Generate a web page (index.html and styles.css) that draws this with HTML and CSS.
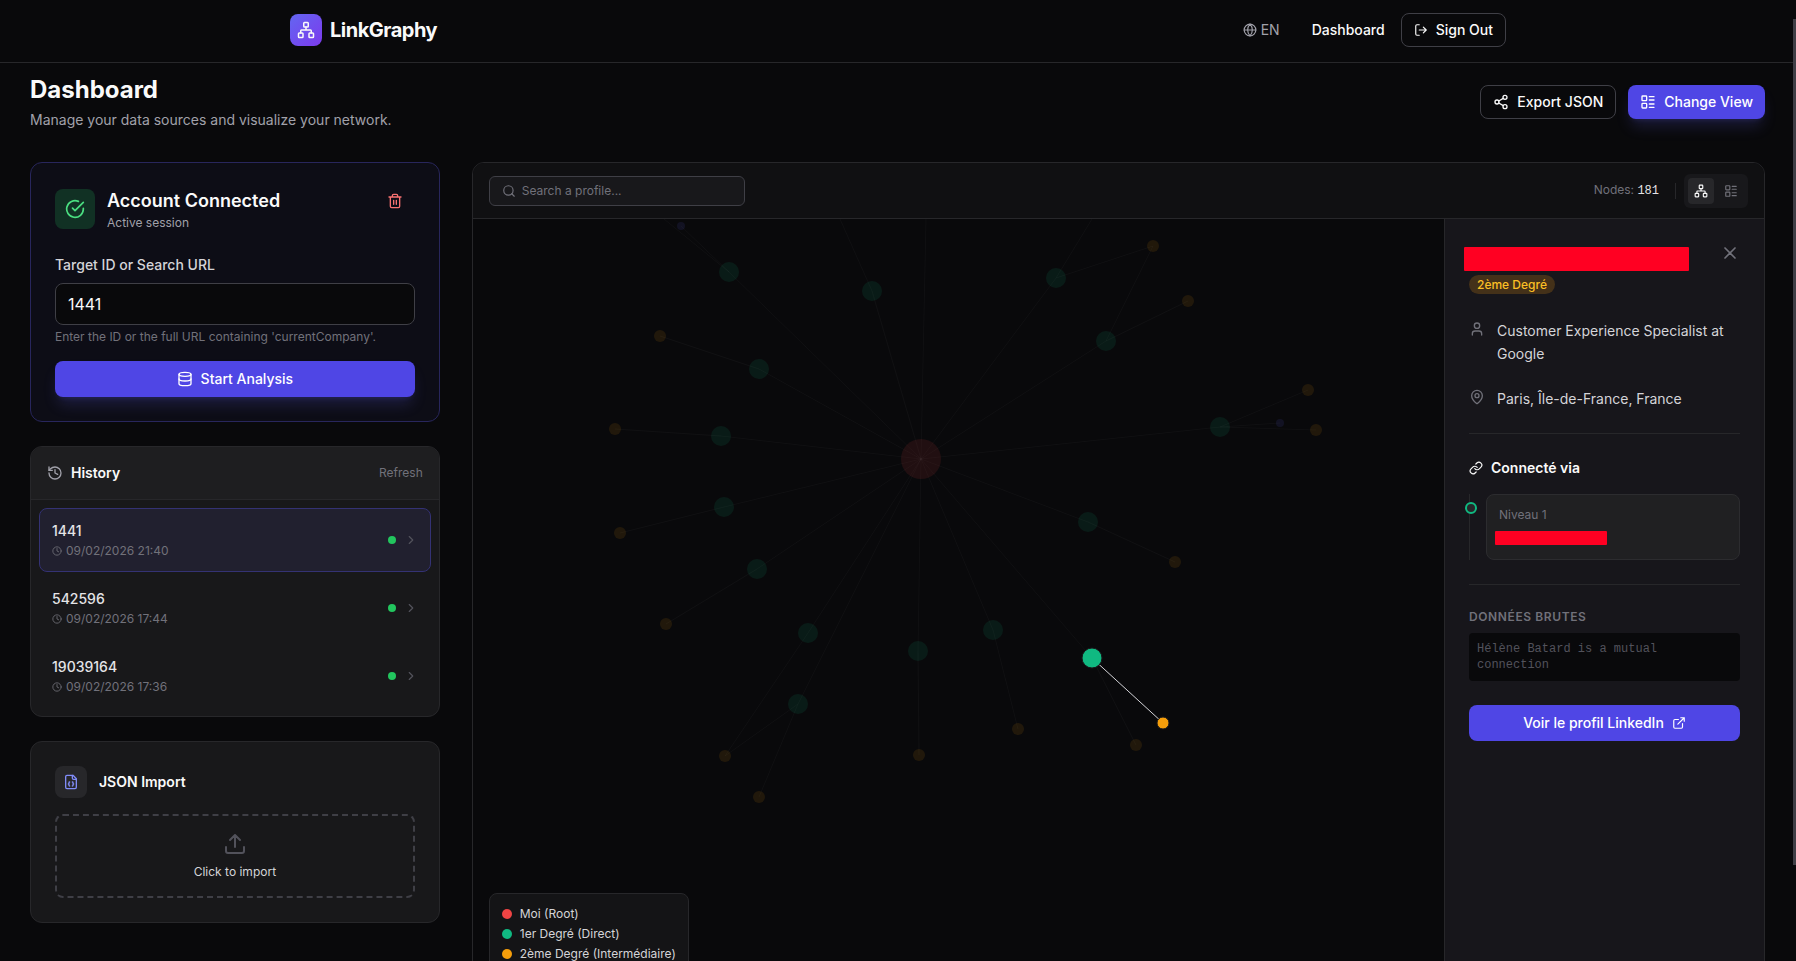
FILE: index.html
```html
<!DOCTYPE html>
<html lang="en">
<head>
    <meta charset="UTF-8">
    <meta name="viewport" content="width=device-width, initial-scale=1.0">
    <title>LinkGraphy - Dashboard</title>
    <link rel="stylesheet" href="styles.css">
</head>
<body>
    <!-- Shared icons -->
    <svg class="sprite" aria-hidden="true">
        <symbol id="i-network" viewBox="0 0 24 24"><rect x="16" y="16" width="6" height="6" rx="1"/><rect x="2" y="16" width="6" height="6" rx="1"/><rect x="9" y="2" width="6" height="6" rx="1"/><path d="M5 16v-3a1 1 0 0 1 1-1h12a1 1 0 0 1 1 1v3M12 12V8"/></symbol>
        <symbol id="i-layout" viewBox="0 0 24 24"><rect x="3" y="3" width="7" height="7" rx="1"/><rect x="3" y="14" width="7" height="7" rx="1"/><path d="M14 4h7M14 9h7M14 15h7M14 20h7"/></symbol>
        <symbol id="i-clock" viewBox="0 0 24 24"><circle cx="12" cy="12" r="10"/><path d="M12 6v6l4 2"/></symbol>
        <symbol id="i-chevron" viewBox="0 0 24 24"><path d="m9 18 6-6-6-6"/></symbol>
    </svg>

    <header class="topbar">
        <div class="topbar-inner">
            <a class="brand" href="#">
                <span class="brand-logo"><svg class="icon icon-18"><use href="#i-network"/></svg></span>
                <span class="brand-name">LinkGraphy</span>
            </a>
            <nav class="nav">
                <button class="lang" type="button">
                    <svg class="icon icon-14" viewBox="0 0 24 24"><circle cx="12" cy="12" r="10"/><path d="M12 2a14.5 14.5 0 0 0 0 20 14.5 14.5 0 0 0 0-20M2 12h20"/></svg>
                    EN
                </button>
                <a class="nav-link" href="#">Dashboard</a>
                <button class="btn btn-outline" type="button">
                    <svg class="icon icon-14" viewBox="0 0 24 24"><path d="M9 21H5a2 2 0 0 1-2-2V5a2 2 0 0 1 2-2h4M16 17l5-5-5-5M21 12H9"/></svg>
                    Sign Out
                </button>
            </nav>
        </div>
    </header>

    <main class="page">
        <div class="page-head">
            <div>
                <h1>Dashboard</h1>
                <p class="subtitle">Manage your data sources and visualize your network.</p>
            </div>
            <div class="actions">
                <button class="btn btn-outline" type="button">
                    <svg class="icon icon-16" viewBox="0 0 24 24"><circle cx="18" cy="5" r="3"/><circle cx="6" cy="12" r="3"/><circle cx="18" cy="19" r="3"/><path d="m8.59 13.51 6.83 3.98M15.41 6.51l-6.82 3.98"/></svg>
                    Export JSON
                </button>
                <button class="btn btn-primary glow" type="button">
                    <svg class="icon icon-16"><use href="#i-layout"/></svg>
                    Change View
                </button>
            </div>
        </div>

        <div class="grid">
            <aside class="column">
                <section class="card card-account">
                    <div class="account-head">
                        <span class="account-icon">
                            <svg class="icon icon-20" viewBox="0 0 24 24"><path d="M22 11.08V12a10 10 0 1 1-5.93-9.14"/><path d="M22 4 12 14.01l-3-3"/></svg>
                        </span>
                        <div class="account-text">
                            <h2>Account Connected</h2>
                            <p>Active session</p>
                        </div>
                        <button class="btn-trash" type="button" aria-label="Delete session">
                            <svg class="icon icon-16" viewBox="0 0 24 24"><path d="M3 6h18M19 6v14a2 2 0 0 1-2 2H7a2 2 0 0 1-2-2V6M8 6V4a2 2 0 0 1 2-2h4a2 2 0 0 1 2 2v2M10 11v6M14 11v6"/></svg>
                        </button>
                    </div>
                    <label class="field-label" for="target">Target ID or Search URL</label>
                    <input class="field" id="target" type="text" value="1441">
                    <p class="hint">Enter the ID or the full URL containing 'currentCompany'.</p>
                    <button class="btn btn-primary btn-wide glow" type="button">
                        <svg class="icon icon-16" viewBox="0 0 24 24"><ellipse cx="12" cy="5" rx="9" ry="3"/><path d="M3 5v14a9 3 0 0 0 18 0V5"/><path d="M3 12a9 3 0 0 0 18 0"/></svg>
                        Start Analysis
                    </button>
                </section>

                <section class="card history">
                    <div class="history-head">
                        <h3>
                            <svg class="icon icon-16" viewBox="0 0 24 24"><path d="M3 12a9 9 0 1 0 9-9 9.75 9.75 0 0 0-6.74 2.74L3 8"/><path d="M3 3v5h5M12 7v5l4 2"/></svg>
                            History
                        </h3>
                        <button class="btn-text" type="button">Refresh</button>
                    </div>
                    <div class="history-list">
                        <button class="history-item active" type="button">
                            <span class="history-info">
                                <span class="history-id">1441</span>
                                <span class="history-date"><svg class="icon icon-10"><use href="#i-clock"/></svg>09/02/2026 21:40</span>
                            </span>
                            <span class="status"></span>
                            <svg class="icon icon-14"><use href="#i-chevron"/></svg>
                        </button>
                        <button class="history-item" type="button">
                            <span class="history-info">
                                <span class="history-id">542596</span>
                                <span class="history-date"><svg class="icon icon-10"><use href="#i-clock"/></svg>09/02/2026 17:44</span>
                            </span>
                            <span class="status"></span>
                            <svg class="icon icon-14"><use href="#i-chevron"/></svg>
                        </button>
                        <button class="history-item" type="button">
                            <span class="history-info">
                                <span class="history-id">19039164</span>
                                <span class="history-date"><svg class="icon icon-10"><use href="#i-clock"/></svg>09/02/2026 17:36</span>
                            </span>
                            <span class="status"></span>
                            <svg class="icon icon-14"><use href="#i-chevron"/></svg>
                        </button>
                    </div>
                </section>

                <section class="card import">
                    <div class="import-head">
                        <span class="import-icon">
                            <svg class="icon icon-16" viewBox="0 0 24 24"><path d="M15 2H6a2 2 0 0 0-2 2v16a2 2 0 0 0 2 2h12a2 2 0 0 0 2-2V7Z"/><path d="M14 2v4a2 2 0 0 0 2 2h4"/><path d="M10 12a1 1 0 0 0-1 1v1a1 1 0 0 1-1 1 1 1 0 0 1 1 1v1a1 1 0 0 0 1 1M14 18a1 1 0 0 0 1-1v-1a1 1 0 0 1 1-1 1 1 0 0 1-1-1v-1a1 1 0 0 0-1-1"/></svg>
                        </span>
                        <h3>JSON Import</h3>
                    </div>
                    <button class="dropzone" type="button">
                        <svg class="icon icon-24" viewBox="0 0 24 24"><path d="M21 15v4a2 2 0 0 1-2 2H5a2 2 0 0 1-2-2v-4M17 8l-5-5-5 5M12 3v12"/></svg>
                        Click to import
                    </button>
                </section>
            </aside>

            <section class="viewer">
                <div class="toolbar">
                    <div class="search">
                        <svg class="icon icon-14" viewBox="0 0 24 24"><circle cx="11" cy="11" r="8"/><path d="m21 21-4.3-4.3"/></svg>
                        <input type="text" placeholder="Search a profile..." aria-label="Search a profile">
                    </div>
                    <div class="toolbar-right">
                        <span class="count">Nodes: <b>181</b></span>
                        <div class="toggle-wrap">
                            <div class="toggle">
                                <button class="on" type="button" aria-label="Graph view"><svg class="icon icon-14"><use href="#i-network"/></svg></button>
                                <button type="button" aria-label="List view"><svg class="icon icon-14"><use href="#i-layout"/></svg></button>
                            </div>
                        </div>
                    </div>
                </div>

                <div class="stage">
                    <div class="graph">
                        <svg class="graph-svg" aria-hidden="true">
                            <g class="edges">
                                <path d="M448 240 256 53 191 0M256 53 208 7"/>
                                <path d="M448 240 399 72 367 0M448 240 453 0"/>
                                <path d="M448 240 286 150 187 117"/>
                                <path d="M448 240 248 217 142 210"/>
                                <path d="M448 240 251 288 147 314"/>
                                <path d="M448 240 284 350 193 405"/>
                                <path d="M448 240 335 414 252 537 325 485 286 578M448 240 325 485"/>
                                <path d="M448 240 445 432 446 536"/>
                                <path d="M448 240 520 411 545 510"/>
                                <path d="M448 240 619 439 663 526"/>
                                <path d="M448 240 615 303 702 343"/>
                                <path d="M448 240 747 208 835 171M747 208 807 204M747 208 843 211"/>
                                <path d="M448 240 633 122 715 82M633 122 680 27 583 59 619 0M448 240 583 59"/>
                            </g>
                            <g class="dim">
                                <circle class="root" cx="448" cy="240" r="20"/>
                                <g class="first">
                                    <circle cx="256" cy="53" r="10"/>
                                    <circle cx="399" cy="72" r="10"/>
                                    <circle cx="286" cy="150" r="10"/>
                                    <circle cx="248" cy="217" r="10"/>
                                    <circle cx="251" cy="288" r="10"/>
                                    <circle cx="284" cy="350" r="10"/>
                                    <circle cx="335" cy="414" r="10"/>
                                    <circle cx="325" cy="485" r="10"/>
                                    <circle cx="445" cy="432" r="10"/>
                                    <circle cx="520" cy="411" r="10"/>
                                    <circle cx="615" cy="303" r="10"/>
                                    <circle cx="747" cy="208" r="10"/>
                                    <circle cx="633" cy="122" r="10"/>
                                    <circle cx="583" cy="59" r="10"/>
                                </g>
                                <g class="second">
                                    <circle cx="187" cy="117" r="6"/>
                                    <circle cx="142" cy="210" r="6"/>
                                    <circle cx="147" cy="314" r="6"/>
                                    <circle cx="193" cy="405" r="6"/>
                                    <circle cx="252" cy="537" r="6"/>
                                    <circle cx="286" cy="578" r="6"/>
                                    <circle cx="446" cy="536" r="6"/>
                                    <circle cx="545" cy="510" r="6"/>
                                    <circle cx="663" cy="526" r="6"/>
                                    <circle cx="702" cy="343" r="6"/>
                                    <circle cx="835" cy="171" r="6"/>
                                    <circle cx="843" cy="211" r="6"/>
                                    <circle cx="715" cy="82" r="6"/>
                                    <circle cx="680" cy="27" r="6"/>
                                </g>
                                <g class="third">
                                    <circle cx="208" cy="7" r="4"/>
                                    <circle cx="807" cy="204" r="4"/>
                                </g>
                            </g>
                            <!-- Highlighted path -->
                            <path class="edge-active" d="M619 439 690 504"/>
                            <circle class="first ring" cx="619" cy="439" r="10"/>
                            <circle class="second ring" cx="690" cy="504" r="6"/>
                        </svg>
                        <ul class="legend">
                            <li><span class="dot dot-root"></span>Moi (Root)</li>
                            <li><span class="dot dot-first"></span>1er Degré (Direct)</li>
                            <li><span class="dot dot-second"></span>2ème Degré (Intermédiaire)</li>
                        </ul>
                    </div>

                    <aside class="details" lang="fr">
                        <div class="details-head">
                            <div>
                                <div class="masked masked-name"></div>
                                <span class="badge">2ème Degré</span>
                            </div>
                            <button class="btn-close" type="button" aria-label="Fermer">
                                <svg class="icon icon-20" viewBox="0 0 24 24"><path d="M18 6 6 18M6 6l12 12"/></svg>
                            </button>
                        </div>
                        <div class="facts">
                            <p>
                                <svg class="icon icon-16" viewBox="0 0 24 24"><path d="M19 21v-2a4 4 0 0 0-4-4H9a4 4 0 0 0-4 4v2"/><circle cx="12" cy="7" r="4"/></svg>
                                Customer Experience Specialist at Google
                            </p>
                            <p>
                                <svg class="icon icon-16" viewBox="0 0 24 24"><path d="M20 10c0 5-5.5 10.2-7.4 11.8a1 1 0 0 1-1.2 0C9.5 20.2 4 15 4 10a8 8 0 0 1 16 0"/><circle cx="12" cy="10" r="3"/></svg>
                                Paris, Île-de-France, France
                            </p>
                        </div>
                        <div class="via">
                            <h4>
                                <svg class="icon icon-14" viewBox="0 0 24 24"><path d="M10 13a5 5 0 0 0 7.54.54l3-3a5 5 0 0 0-7.07-7.07l-1.72 1.71"/><path d="M14 11a5 5 0 0 0-7.54-.54l-3 3a5 5 0 0 0 7.07 7.07l1.71-1.71"/></svg>
                                Connecté via
                            </h4>
                            <div class="timeline">
                                <span class="timeline-dot"></span>
                                <div class="timeline-card">
                                    <p>Niveau 1</p>
                                    <div class="masked masked-link"></div>
                                </div>
                            </div>
                        </div>
                        <div class="raw">
                            <h5>Données brutes</h5>
                            <code>Hélène Batard is a mutual connection</code>
                        </div>
                        <a class="btn btn-primary btn-wide" href="#">
                            Voir le profil LinkedIn
                            <svg class="icon icon-14" viewBox="0 0 24 24"><path d="M15 3h6v6M10 14 21 3M18 13v6a2 2 0 0 1-2 2H5a2 2 0 0 1-2-2V8a2 2 0 0 1 2-2h6"/></svg>
                        </a>
                    </aside>
                </div>
            </section>
        </div>
    </main>
    <div class="scroll-thumb"></div>
</body>
</html>
```
FILE: styles.css
```css
* {
    box-sizing: border-box;
    margin: 0;
    padding: 0;
}
body {
    height: 100vh;
    overflow: hidden;
    background-color: #09090b;
    color: #fafafa;
    font-family: Inter, "Liberation Sans", sans-serif;
    font-size: 14px;
    line-height: 20px;
}
button, input {
    font: inherit;
    color: inherit;
    background: none;
    border: none;
}
button {
    cursor: pointer;
}
a {
    color: inherit;
    text-decoration: none;
}
.sprite {
    display: none;
}

/* Icons */
.icon {
    flex-shrink: 0;
    fill: none;
    stroke: currentColor;
    stroke-width: 2;
    stroke-linecap: round;
    stroke-linejoin: round;
}
.icon-10 { width: 10px; height: 10px; }
.icon-14 { width: 14px; height: 14px; }
.icon-16 { width: 16px; height: 16px; }
.icon-18 { width: 18px; height: 18px; }
.icon-20 { width: 20px; height: 20px; }
.icon-24 { width: 24px; height: 24px; }

/* Buttons */
.btn {
    display: flex;
    align-items: center;
    justify-content: center;
    gap: 8px;
    padding: 7px 12px;
    border-radius: 8px;
    font-weight: 500;
    white-space: nowrap;
}
.btn-outline {
    padding: 6px 12px;
    border: 1px solid #3f3f46;
}
.btn-primary {
    background-color: #4f46e5;
    color: #fff;
}
.btn-wide {
    width: 100%;
    padding: 8px 16px;
}
.glow {
    box-shadow: 0 10px 15px -3px rgba(99, 102, 241, 0.2), 0 4px 6px -4px rgba(99, 102, 241, 0.2);
}

/* Top bar */
.topbar {
    border-bottom: 1px solid #27272a;
}
.topbar-inner {
    display: flex;
    align-items: center;
    justify-content: space-between;
    max-width: 1280px;
    margin: 0 auto;
    padding: 13px 32px 15px;
}
.brand {
    display: flex;
    align-items: center;
    gap: 8px;
}
.brand-logo {
    display: flex;
    align-items: center;
    justify-content: center;
    width: 32px;
    height: 32px;
    border-radius: 8px;
    background: linear-gradient(135deg, #6366f1, #7c3aed);
}
.brand-name {
    font-size: 20px;
    line-height: 28px;
    font-weight: 700;
    letter-spacing: -0.025em;
}
.nav {
    display: flex;
    align-items: center;
    gap: 16px;
}
.lang {
    display: flex;
    align-items: center;
    gap: 4px;
    margin-right: 16px;
    color: #a1a1aa;
}
.nav-link {
    font-weight: 500;
}

/* Page */
.page {
    padding: 11px 31px 0 30px;
}
.page-head {
    display: flex;
    align-items: center;
    justify-content: space-between;
    margin-bottom: 32px;
}
h1 {
    font-size: 24px;
    line-height: 32px;
    font-weight: 700;
}
.subtitle {
    margin-top: 4px;
    color: #a1a1aa;
}
.actions {
    display: flex;
    gap: 12px;
}
.grid {
    display: grid;
    grid-template-columns: repeat(12, minmax(0, 1fr));
    gap: 32px;
    align-items: start;
}
.column {
    grid-column: span 3;
    display: flex;
    flex-direction: column;
    gap: 24px;
}
.card {
    border: 1px solid #27272a;
    border-radius: 12px;
    background-color: #18181a;
    overflow: hidden;
}
h3 {
    font-size: 14px;
    line-height: 20px;
    font-weight: 600;
}

/* Account card */
.card-account {
    padding: 24px;
    border-color: #28265c;
    background-color: #0d0d16;
}
.account-head {
    display: flex;
    align-items: center;
    gap: 12px;
    margin-bottom: 24px;
}
.account-icon {
    display: flex;
    align-items: center;
    justify-content: center;
    width: 40px;
    height: 40px;
    border-radius: 8px;
    background-color: #113124;
    color: #4ade80;
}
.account-text {
    flex: 1;
}
.account-text h2 {
    font-size: 18px;
    line-height: 28px;
    font-weight: 600;
}
.account-text p {
    font-size: 12px;
    line-height: 16px;
    color: #a1a1aa;
}
.btn-trash {
    display: flex;
    align-self: flex-start;
    padding: 6px 12px;
    color: #f87171;
}
.field-label {
    display: block;
    margin-bottom: 8px;
    font-weight: 500;
    color: #d4d4d8;
}
.field {
    width: 100%;
    padding: 8px 12px;
    border: 1px solid #3f3f46;
    border-radius: 8px;
    background-color: #09090b;
    font-size: 16px;
    line-height: 24px;
}
.hint {
    margin: 4px 0 16px;
    font-size: 12px;
    line-height: 16px;
    color: #71717a;
}

/* History */
.history-head {
    display: flex;
    align-items: center;
    justify-content: space-between;
    padding: 16px;
    border-bottom: 1px solid #27272a;
    background-color: #1e1e20;
}
.history-head h3 {
    display: flex;
    align-items: center;
    gap: 8px;
}
.history-head .icon {
    color: #a1a1aa;
}
.btn-text {
    font-size: 12px;
    line-height: 16px;
    color: #71717a;
}
.history-list {
    display: flex;
    flex-direction: column;
    gap: 4px;
    padding: 8px;
}
.history-item {
    display: flex;
    align-items: center;
    gap: 8px;
    padding: 12px;
    border: 1px solid transparent;
    border-radius: 8px;
    text-align: left;
    color: #52525b;
}
.history-item.active {
    border-color: #343274;
    background-color: #21202f;
}
.history-info {
    flex: 1;
    display: flex;
    flex-direction: column;
    gap: 2px;
}
.history-id {
    font-weight: 500;
    color: #e4e4e7;
}
.history-date {
    display: flex;
    align-items: center;
    gap: 4px;
    font-size: 12px;
    line-height: 16px;
    color: #71717a;
}
.status {
    width: 8px;
    height: 8px;
    border-radius: 50%;
    background-color: #22c55e;
}

/* Import */
.import {
    padding: 24px;
}
.import-head {
    display: flex;
    align-items: center;
    gap: 12px;
    margin-bottom: 16px;
}
.import-icon {
    display: flex;
    align-items: center;
    justify-content: center;
    width: 32px;
    height: 32px;
    border-radius: 8px;
    background-color: #27272a;
    color: #818cf8;
}
.dropzone {
    display: flex;
    flex-direction: column;
    align-items: center;
    gap: 8px;
    width: 100%;
    padding: 16px;
    border: 2px dashed #3f3f46;
    border-radius: 8px;
    font-size: 12px;
    line-height: 16px;
    color: #d4d4d8;
}
.dropzone .icon {
    color: #52525b;
}

/* Viewer */
.viewer {
    grid-column: span 9;
    display: flex;
    flex-direction: column;
    height: calc(100vh - 131px);
    border: 1px solid #27272a;
    border-radius: 12px;
    overflow: hidden;
}
.toolbar {
    display: flex;
    align-items: center;
    justify-content: space-between;
    min-height: 56px;
    padding: 0 16px;
    border-bottom: 1px solid #27272a;
    background-color: #101012;
}
.search {
    display: flex;
    align-items: center;
    gap: 6px;
    width: 256px;
    padding: 6px 12px;
    border: 1px solid #3f3f46;
    border-radius: 6px;
    background-color: #18181b;
    color: #71717a;
    font-size: 12px;
    line-height: 16px;
}
.search input {
    flex: 1;
    min-width: 0;
    outline: none;
}
.search input::placeholder {
    color: #71717a;
}
.toolbar-right {
    display: flex;
    align-items: center;
    gap: 16px;
}
.count {
    font-size: 12px;
    line-height: 16px;
    color: #71717a;
}
.count b {
    font-family: "Liberation Mono", monospace;
    font-weight: 400;
    color: #e4e4e7;
}
.toggle-wrap {
    display: flex;
    align-items: center;
    gap: 8px;
}
.toggle-wrap::before {
    content: "";
    width: 1px;
    height: 16px;
    background-color: #27272a;
}
.toggle {
    display: flex;
    gap: 4px;
    padding: 4px;
    border-radius: 6px;
    background-color: #18181b;
}
.toggle button {
    display: flex;
    padding: 6px;
    border-radius: 4px;
    color: #71717a;
}
.toggle .on {
    background-color: #27272a;
    color: #fafafa;
}
.stage {
    flex: 1;
    display: flex;
    min-height: 0;
}

/* Graph */
.graph {
    position: relative;
    flex: 1;
    min-width: 0;
}
.graph-svg {
    display: block;
    width: 100%;
    height: 100%;
}
.edges {
    fill: none;
    stroke: #fff;
    stroke-opacity: 0.03;
}
.dim {
    opacity: 0.1;
}
.root { fill: #ef4444; }
.first { fill: #10b981; }
.second { fill: #f59e0b; }
.third { fill: #6366f1; }
.ring {
    stroke: #18181b;
    stroke-width: 1;
}
.edge-active {
    stroke: #d4d4d8;
}
.legend {
    position: absolute;
    left: 16px;
    bottom: 16px;
    display: flex;
    flex-direction: column;
    gap: 4px;
    padding: 12px;
    border: 1px solid #27272a;
    border-radius: 8px;
    background-color: #141416;
    list-style: none;
    font-size: 12px;
    line-height: 16px;
    color: #d4d4d8;
}
.legend li {
    display: flex;
    align-items: center;
    gap: 8px;
}
.dot {
    width: 10px;
    height: 10px;
    border-radius: 50%;
}
.dot-root { background-color: #ef4444; }
.dot-first { background-color: #10b981; }
.dot-second { background-color: #f59e0b; }

/* Profile details */
.details {
    width: 320px;
    padding: 24px;
    border-left: 1px solid #27272a;
    background-color: #17161b;
}
.details-head {
    display: flex;
    align-items: flex-start;
    justify-content: space-between;
    margin-bottom: 25px;
}
.masked {
    border-radius: 1px;
    background-color: #ff0022;
}
.masked-name {
    width: 225px;
    height: 24px;
    margin: 4px 0 4px -5px;
}
.badge {
    display: block;
    width: fit-content;
    padding: 2px 8px;
    border-radius: 10px;
    background-color: #443119;
    color: #fbbf24;
    font-size: 12px;
    line-height: 15px;
    font-weight: 500;
}
.btn-close {
    display: flex;
    color: #71717a;
}
.facts {
    display: flex;
    flex-direction: column;
    gap: 22px;
    padding-bottom: 23px;
    border-bottom: 1px solid #27272a;
    line-height: 23px;
    color: #d4d4d8;
}
.facts p {
    display: flex;
    gap: 12px;
}
.facts .icon {
    margin-top: 2px;
    color: #71717a;
}
.via {
    padding: 24px 0;
    border-bottom: 1px solid #27272a;
}
.via h4 {
    display: flex;
    align-items: center;
    gap: 8px;
    margin-bottom: 16px;
    font-weight: 600;
}
.timeline {
    position: relative;
    padding-left: 16px;
    border-left: 1px solid #27272a;
}
.timeline-dot {
    position: absolute;
    left: -5px;
    top: 8px;
    width: 12px;
    height: 12px;
    border: 2px solid #10b981;
    border-radius: 50%;
    background-color: #27272a;
}
.timeline-card {
    padding: 12px;
    border: 1px solid #2c2c2f;
    border-radius: 8px;
    background-color: #202022;
    font-size: 12px;
    line-height: 16px;
    color: #71717a;
}
.masked-link {
    width: 112px;
    height: 14px;
    margin: 8px 0 2px -4px;
}
.raw {
    padding: 24px 0;
}
.raw h5 {
    margin-bottom: 8px;
    font-size: 12px;
    line-height: 16px;
    font-weight: 600;
    letter-spacing: 0.05em;
    text-transform: uppercase;
    color: #71717a;
}
.raw code {
    display: block;
    padding: 8px;
    border-radius: 4px;
    background-color: #09090b;
    font-family: "Liberation Mono", monospace;
    font-size: 12px;
    line-height: 16px;
    color: #52525b;
}

/* Page scroll indicator */
.scroll-thumb {
    position: fixed;
    top: 19px;
    right: 0;
    width: 3px;
    height: 88vh;
    background-color: #3f3f46;
}
```
